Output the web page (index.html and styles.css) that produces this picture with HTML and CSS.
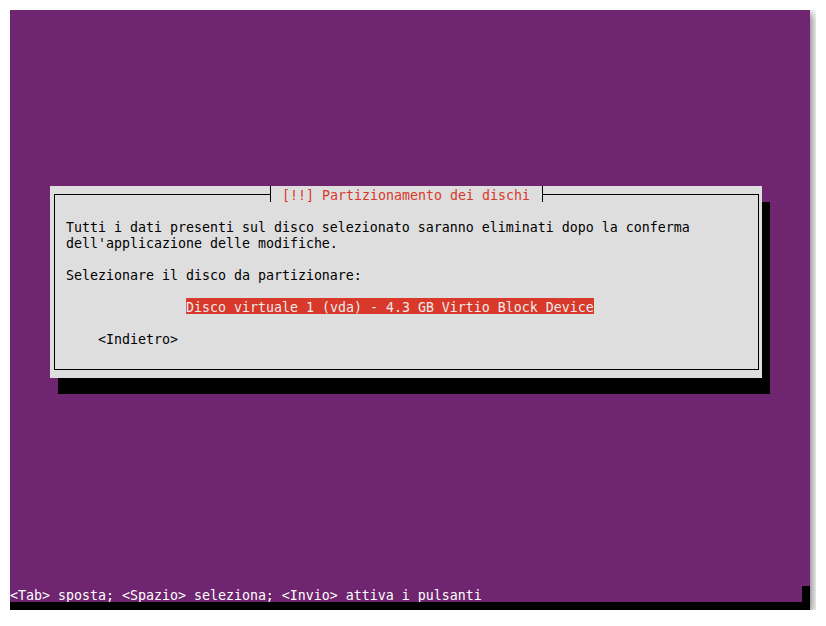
FILE: index.html
```html
<!DOCTYPE html>
<html lang="it">
<head>
  <meta charset="UTF-8" />
  <title>Partizionamento dei dischi</title>
  <link rel="stylesheet" href="styles.css">
</head>
<body>
  <div class="screen">
    <!-- finestra di dialogo -->
    <section class="dialog">
      <div class="frame">
        <h1 class="title"><span class="tee tee-l"></span><span class="title-text"> [!!] Partizionamento dei dischi </span><span class="tee tee-r"></span></h1>
        <p class="row">Tutti i dati presenti sul disco selezionato saranno eliminati dopo la conferma</p>
        <p class="row">dell'applicazione delle modifiche.</p>
        <p class="row"></p>
        <p class="row">Selezionare il disco da partizionare:</p>
        <p class="row"></p>
        <p class="row list"><span class="selected">Disco virtuale 1 (vda) - 4.3 GB Virtio Block Device</span></p>
        <p class="row"></p>
        <p class="row button">&lt;Indietro&gt;</p>
      </div>
    </section>

    <!-- riga di stato -->
    <footer class="status">
      <span class="status-text">&lt;Tab&gt; sposta; &lt;Spazio&gt; seleziona; &lt;Invio&gt; attiva i pulsanti</span>
      <span class="status-end"></span>
    </footer>
    <div class="bottom-strip"></div>
  </div>
</body>
</html>
```

FILE: styles.css
```css
body {margin:10px; background:#fff;}

/* schermo del terminale: celle 8x16, testo un po' in basso nella cella */
.screen {
  width:800px; height:600px; background:#6f256f;
  display:flex; flex-direction:column;
  font-family:"DejaVu Sans Mono", "Liberation Mono", monospace;
  font-size:13.29px; line-height:20px;
  box-shadow:2px 3px 9px rgba(0,0,0,.55);
}

/* dialogo */
.dialog {
  width:712px; height:192px; margin:176px 0 0 40px;
  box-sizing:border-box; padding:8px 3px 8px 4px;
  background:#dedede; color:#000;
  box-shadow:8px 16px 0 #000;
}
.frame {height:100%; box-sizing:border-box; border:1px solid #000; position:relative; padding:23px 0 0 11px;}
.title {
  position:absolute; top:-9px; left:211px; margin:0; height:16px;
  font-size:inherit; font-weight:normal; line-height:20px;
  background:#dedede; color:#d8392b; display:flex; overflow:hidden;
}
.title-text {white-space:pre;}
.tee {width:8px; height:16px; position:relative;}
.tee::before {content:""; position:absolute; left:4px; top:0; width:1px; height:16px; background:#000;}
.tee-l::after {content:""; position:absolute; left:0; top:8px; width:4px; height:1px; background:#000;}
.tee-r::after {content:""; position:absolute; left:5px; top:8px; width:3px; height:1px; background:#000;}

.row {margin:0; height:16px; white-space:pre;}
.list {padding-left:120px;}
.selected {display:inline-block; vertical-align:top; height:16px; overflow:hidden; background:#d8392b; color:#ececec;}
.button {padding-left:32px;}

/* riga di stato */
.status {margin-top:auto; display:flex; height:16px; color:#fff;}
.status-text {flex:1; white-space:pre;}
.status-end {width:8px; background:#000;}
.bottom-strip {height:8px; background:#000; position:relative;}
```
